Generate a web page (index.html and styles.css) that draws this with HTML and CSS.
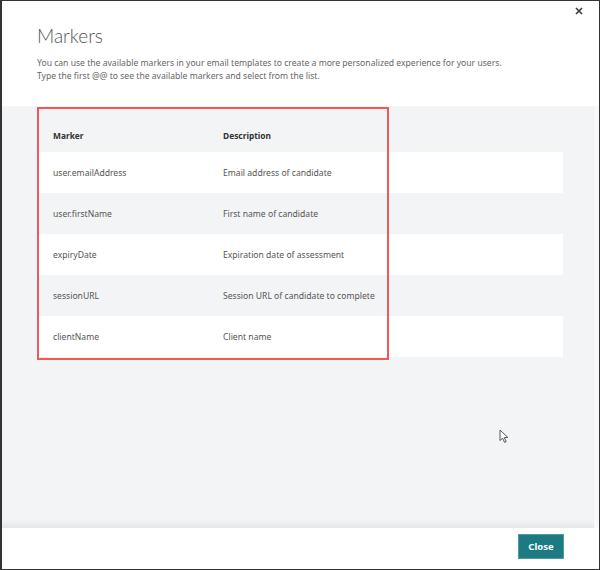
FILE: index.html
```html
<!DOCTYPE html>
<html>
<head>
<meta charset="utf-8">
<link rel="stylesheet" href="styles.css">
</head>
<body>
<div class="modal">
  <button class="x-btn" aria-label="Close">
    <svg width="8" height="8" viewBox="0 0 8 8"><path d="M1 1 L7 7 M7 1 L1 7" stroke="#3a3a3a" stroke-width="1.6" fill="none"/></svg>
  </button>
  <header class="head">
    <h1 class="title">Markers</h1>
    <p class="intro">You can use the available markers in your email templates to create a more personalized experience for your users.<br>Type the first @@ to see the available markers and select from the list.</p>
  </header>
  <main class="body">
    <div class="table">
      <div class="row row-head">
        <div class="c1">Marker</div>
        <div class="c2">Description</div>
      </div>
      <div class="row odd"><div class="c1">user.emailAddress</div><div class="c2">Email address of candidate</div></div>
      <div class="row even"><div class="c1">user.firstName</div><div class="c2">First name of candidate</div></div>
      <div class="row odd"><div class="c1">expiryDate</div><div class="c2">Expiration date of assessment</div></div>
      <div class="row even"><div class="c1">sessionURL</div><div class="c2">Session URL of candidate to complete</div></div>
      <div class="row odd"><div class="c1">clientName</div><div class="c2">Client name</div></div>
      <div class="highlight"></div>
    </div>
    <svg class="cursor" width="11" height="15" viewBox="0 0 11 15"><path d="M1 1 L1 11.5 L3.6 9.2 L5.6 13.4 L7.2 12.6 L5.3 8.6 L8.8 8.4 Z" fill="#fff" stroke="#555" stroke-width="1" stroke-linejoin="round"/></svg>
  </main>
  <footer class="foot">
    <button class="close-btn">Close</button>
  </footer>
</div>
</body>
</html>
```
FILE: styles.css
```css
* { box-sizing: border-box; }
html, body { margin: 0; padding: 0; background: #fff; }
body { font-family: "Noto Sans", "Open Sans", sans-serif; }

.modal {
  position: relative;
  width: 600px;
  height: 570px;
  border-top: 1px solid #333;
  border-left: 2px solid #333;
  border-right: 1px solid #333;
  border-bottom: 1px solid #333;
  display: flex;
  flex-direction: column;
  background: #fff;
}

.x-btn {
  position: absolute;
  top: 6px;
  right: 16px;
  border: 0;
  background: none;
  padding: 0;
  width: 8px;
  height: 8px;
  line-height: 0;
}

.head {
  padding: 23px 0 0 35px;
  height: 105px;
}
.title {
  margin: 0;
  font-family: "Lato", "Noto Sans", sans-serif;
  font-size: 19px;
  font-weight: 300;
  color: #555;
  line-height: 24px;
}
.intro {
  margin: 9px 0 0;
  font-size: 8.6px;
  line-height: 13px;
  color: #666;
}

.body {
  position: relative;
  flex: 1;
  background: #f3f4f6;
  padding: 2px 35px 0 36px;
  box-shadow: inset 0 -7px 6px -4px #e2e3e6;
  border-right: 5px solid #f7f8f9;
}

.table {
  position: relative;
  width: 525px;
}
.row {
  display: flex;
  height: 41px;
  align-items: center;
  font-size: 8.6px;
  color: #555;
}
.row-head {
  height: 44px;
  align-items: flex-end;
  padding-bottom: 11px;
  font-weight: 700;
  color: #333;
  font-size: 8.4px;
}
.odd { background: #fff; }
.even { background: #f3f4f6; }
.c1 { width: 185px; padding-left: 15px; }
.c2 { flex: 1; }

.highlight {
  position: absolute;
  left: -1px;
  top: -1px;
  width: 352px;
  height: 253px;
  border: 2px solid #ee5a5a;
}

.cursor {
  position: absolute;
  left: 497px;
  top: 323px;
}

.foot {
  height: 41px;
  display: flex;
  justify-content: flex-end;
  align-items: flex-start;
  padding: 6px 35px 0 0;
}
.close-btn {
  width: 46px;
  height: 25px;
  background: #1b7a82;
  color: #fff;
  border: 1px solid #4f9ba1;
  font-family: "Noto Sans", "Open Sans", sans-serif;
  font-weight: 700;
  font-size: 9.5px;
  padding: 0;
}
```
